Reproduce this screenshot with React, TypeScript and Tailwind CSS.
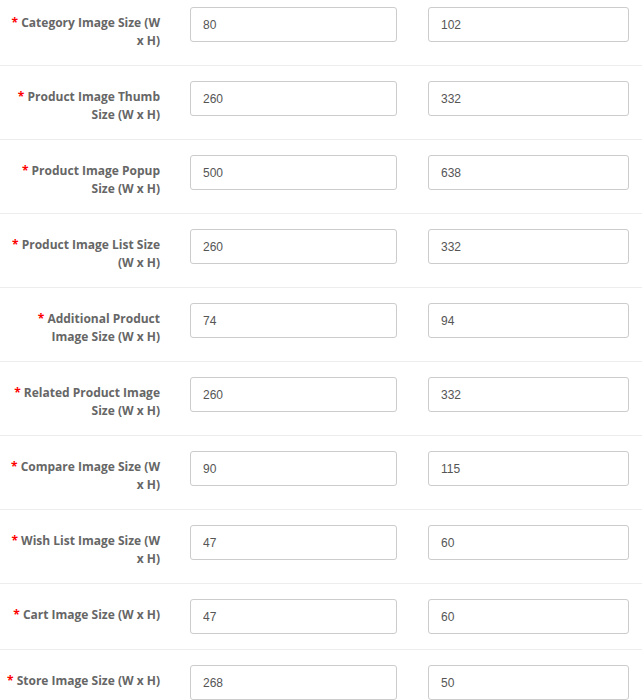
import React from 'react';

const rows = [
  { label: 'Category Image Size (W x H)', w: '80', h: '102' },
  { label: 'Product Image Thumb Size (W x H)', w: '260', h: '332' },
  { label: 'Product Image Popup Size (W x H)', w: '500', h: '638' },
  { label: 'Product Image List Size (W x H)', w: '260', h: '332' },
  { label: 'Additional Product Image Size (W x H)', w: '74', h: '94' },
  { label: 'Related Product Image Size (W x H)', w: '260', h: '332' },
  { label: 'Compare Image Size (W x H)', w: '90', h: '115' },
  { label: 'Wish List Image Size (W x H)', w: '47', h: '60' },
  { label: 'Cart Image Size (W x H)', w: '47', h: '60' },
  { label: 'Store Image Size (W x H)', w: '268', h: '50' },
];

const App: React.FC = () => {
  return (
    <div className="w-[642px] h-[700px] overflow-hidden bg-white">
      <div className="-mt-[9px]">
        {rows.map((row) => (
          <div key={row.label} className="flex items-start border-t border-[#ededed] py-[15px]">
            {/* label */}
            <label className="w-[156px] ml-[4px] pt-[7px] text-right text-[12px] leading-[18px] font-bold text-[#666] font-['Open_Sans',sans-serif]">
              <span className="text-[#f00]">* </span>
              {row.label}
            </label>
            <div className="ml-[30px] flex gap-[31px]">
              <input
                readOnly
                value={row.w}
                className="w-[207px] h-[35px] px-[12px] border border-[#ccc] rounded-[3px] text-[12px] text-[#555] font-['Liberation_Sans',Arial,sans-serif] outline-none"
              />
              <input
                readOnly
                value={row.h}
                className="w-[201px] h-[35px] px-[12px] border border-[#ccc] rounded-[3px] text-[12px] text-[#555] font-['Liberation_Sans',Arial,sans-serif] outline-none"
              />
            </div>
          </div>
        ))}
      </div>
    </div>
  );
};

export default App;
